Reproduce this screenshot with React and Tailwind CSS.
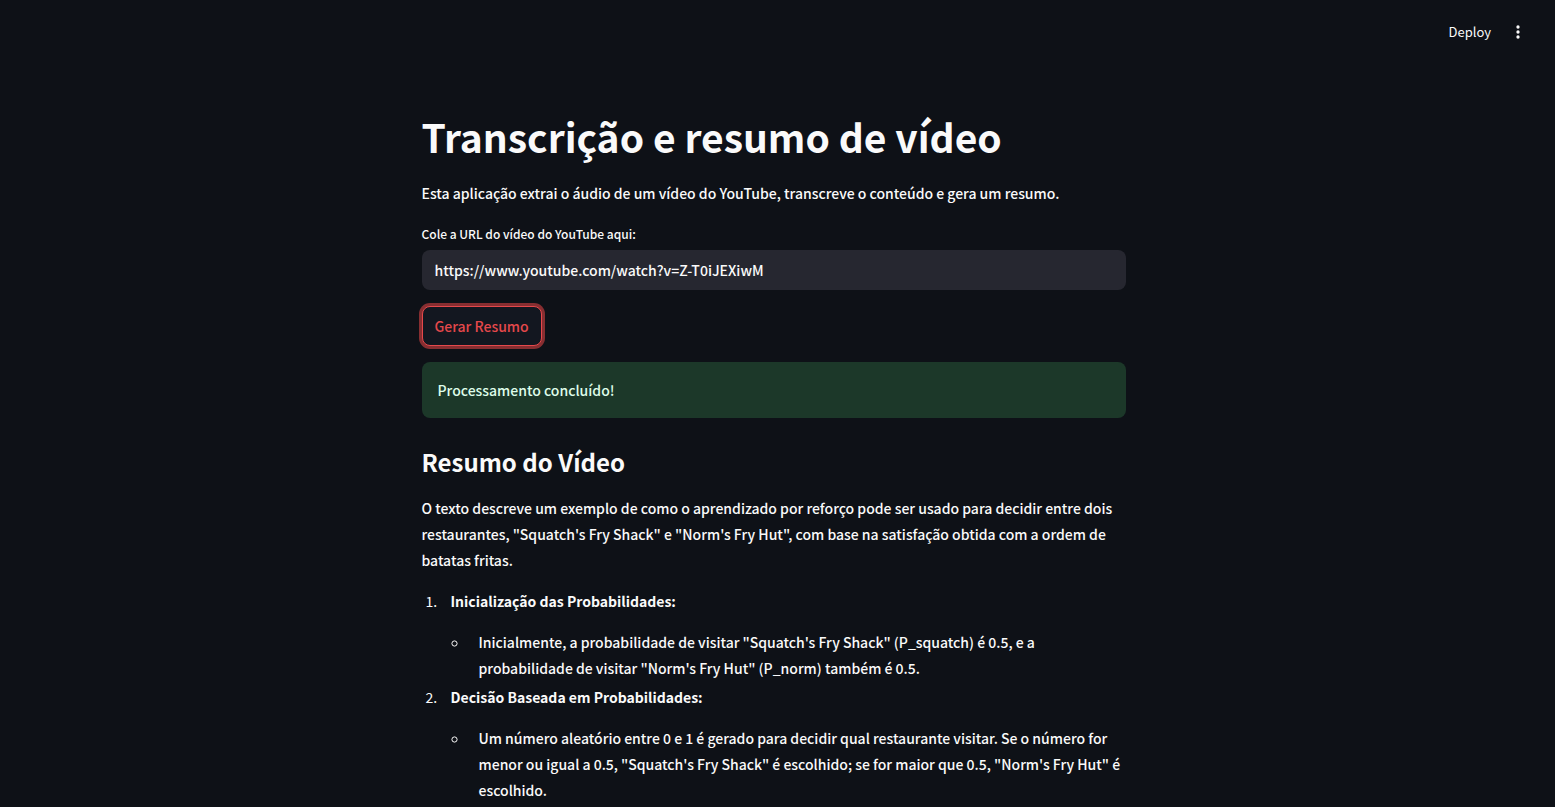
function Step({ number, title, children }) {
  return (
    <li className="flex flex-col">
      <p className="flex">
        <span className="w-[29px] shrink-0 pl-1 font-normal">{number}.</span>
        <strong className="font-bold">{title}</strong>
      </p>
      <ul className="mt-[15px] pl-[29px]">
        <li className="flex">
          <span className="w-7 shrink-0 pt-[11px]">
            <svg width="7" height="7" viewBox="0 0 7 7" fill="none" stroke="currentColor">
              <circle cx="3.5" cy="3.5" r="2.6" />
            </svg>
          </span>
          <span>{children}</span>
        </li>
      </ul>
    </li>
  );
}

export default function App() {
  return (
    <div className="h-screen overflow-hidden bg-[#0e1117] font-['Noto_Sans_CJK_JP','Noto_Sans',sans-serif] text-[14px] font-medium leading-[26px] text-[#fafafa]">
      <header className="flex h-16 items-center justify-end gap-[17px] pr-[27px]">
        <button type="button" className="text-[13px] font-normal leading-5">Deploy</button>
        <button type="button" aria-label="Menu" className="flex size-5 items-center justify-center">
          <svg width="20" height="20" viewBox="0 0 24 24" fill="currentColor">
            <circle cx="12" cy="6" r="2" />
            <circle cx="12" cy="12" r="2" />
            <circle cx="12" cy="18" r="2" />
          </svg>
        </button>
      </header>
      <div className="pr-2">
        <main className="mx-auto flex w-full max-w-[712px] flex-col px-1 pt-[46px]">
          <h1 className="text-[39px] font-bold leading-[53px]">Transcrição e resumo de vídeo</h1>
          <p className="mt-[17px]">
            Esta aplicação extrai o áudio de um vídeo do YouTube, transcreve o conteúdo e gera um resumo.
          </p>
          <label htmlFor="url" className="mt-4 text-[12px] leading-6">Cole a URL do vídeo do YouTube aqui:</label>
          <input
            id="url"
            type="text"
            defaultValue="https://www.youtube.com/watch?v=Z-T0iJEXiwM"
            className="mt-1 h-10 w-full rounded-lg bg-[#262730] px-[13px] outline-none"
          />
          <button
            type="button"
            className="mt-4 h-10 self-start rounded-lg border border-[#e5484b] bg-[#131720] px-3 text-[#e5484b] ring-3 ring-[#ff4b4b]/50"
          >
            Gerar Resumo
          </button>
          <div role="status" className="mt-4 rounded-lg bg-[#1c3829] p-4 leading-6 text-[#dffde9]">Processamento concluído!</div>
          <h2 className="mt-[27px] text-[24px] font-bold leading-[34px]">Resumo do Vídeo</h2>
          <p className="mt-4">
            O texto descreve um exemplo de como o aprendizado por reforço pode ser usado para decidir entre dois
            restaurantes, "Squatch's Fry Shack" e "Norm's Fry Hut", com base na satisfação obtida com a ordem de
            batatas fritas.
          </p>
          <ol className="mt-[15px] flex flex-col gap-[3px]">
            <Step number={1} title="Inicialização das Probabilidades:">
              Inicialmente, a probabilidade de visitar "Squatch's Fry Shack" (P_squatch) é 0.5, e a<br />
              probabilidade de visitar "Norm's Fry Hut" (P_norm) também é 0.5.
            </Step>
            <Step number={2} title="Decisão Baseada em Probabilidades:">
              Um número aleatório entre 0 e 1 é gerado para decidir qual restaurante visitar. Se o número for
              menor ou igual a 0.5, "Squatch's Fry Shack" é escolhido; se for maior que 0.5, "Norm's Fry Hut" é
              escolhido.
            </Step>
          </ol>
        </main>
      </div>
    </div>
  );
}
